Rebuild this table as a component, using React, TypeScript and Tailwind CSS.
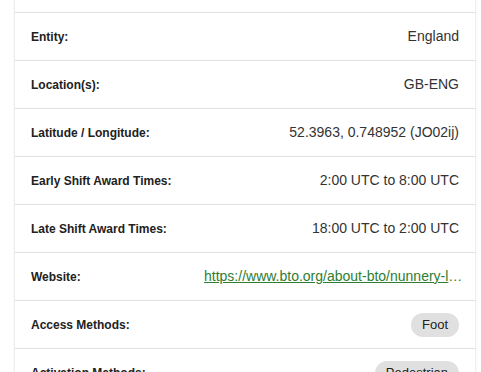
const rows: { label: string; value: string; kind?: 'link' | 'chip' }[] = [
  { label: 'Name:', value: 'Nunnery Lakes' },
  { label: 'Entity:', value: 'England' },
  { label: 'Location(s):', value: 'GB-ENG' },
  { label: 'Latitude / Longitude:', value: '52.3963, 0.748952 (JO02ij)' },
  { label: 'Early Shift Award Times:', value: '2:00 UTC to 8:00 UTC' },
  { label: 'Late Shift Award Times:', value: '18:00 UTC to 2:00 UTC' },
  { label: 'Website:', value: 'https://www.bto.org/about-bto/nunnery-lakes-reserve', kind: 'link' },
  { label: 'Access Methods:', value: 'Foot', kind: 'chip' },
  { label: 'Activation Methods:', value: 'Pedestrian', kind: 'chip' },
];

export default function App() {
  return (
    <div
      className="h-[372px] w-[481px] overflow-hidden bg-white"
      style={{ fontFamily: "'Liberation Sans', Arial, sans-serif" }}
    >
      {/* Card */}
      <div className="mx-[15px] -mt-[35px] w-[460px] bg-white shadow-[0_2px_1px_-1px_rgba(0,0,0,0.2),0_1px_1px_0_rgba(0,0,0,0.14),0_1px_3px_0_rgba(0,0,0,0.12)]">
        {rows.map((r) => (
          <div
            key={r.label}
            className="flex h-[48px] items-center border-b border-[#e0e0e0] px-[16px]"
          >
            <div className="w-[173px] shrink-0 text-[12px] font-bold text-[#212121]">{r.label}</div>
            <div className="min-w-0 flex-1 text-right text-[14px] text-[#333333]">
              {r.kind === 'link' ? (
                <a href="#" className="-mr-[10px] block truncate text-[#2e7d32] underline">
                  {r.value}
                </a>
              ) : r.kind === 'chip' ? (
                <span className="inline-flex h-[24px] items-center rounded-full bg-[#e0e0e0] px-[11px] text-[13px] text-[#212121]">
                  {r.value}
                </span>
              ) : (
                r.value
              )}
            </div>
          </div>
        ))}
      </div>
    </div>
  );
}
